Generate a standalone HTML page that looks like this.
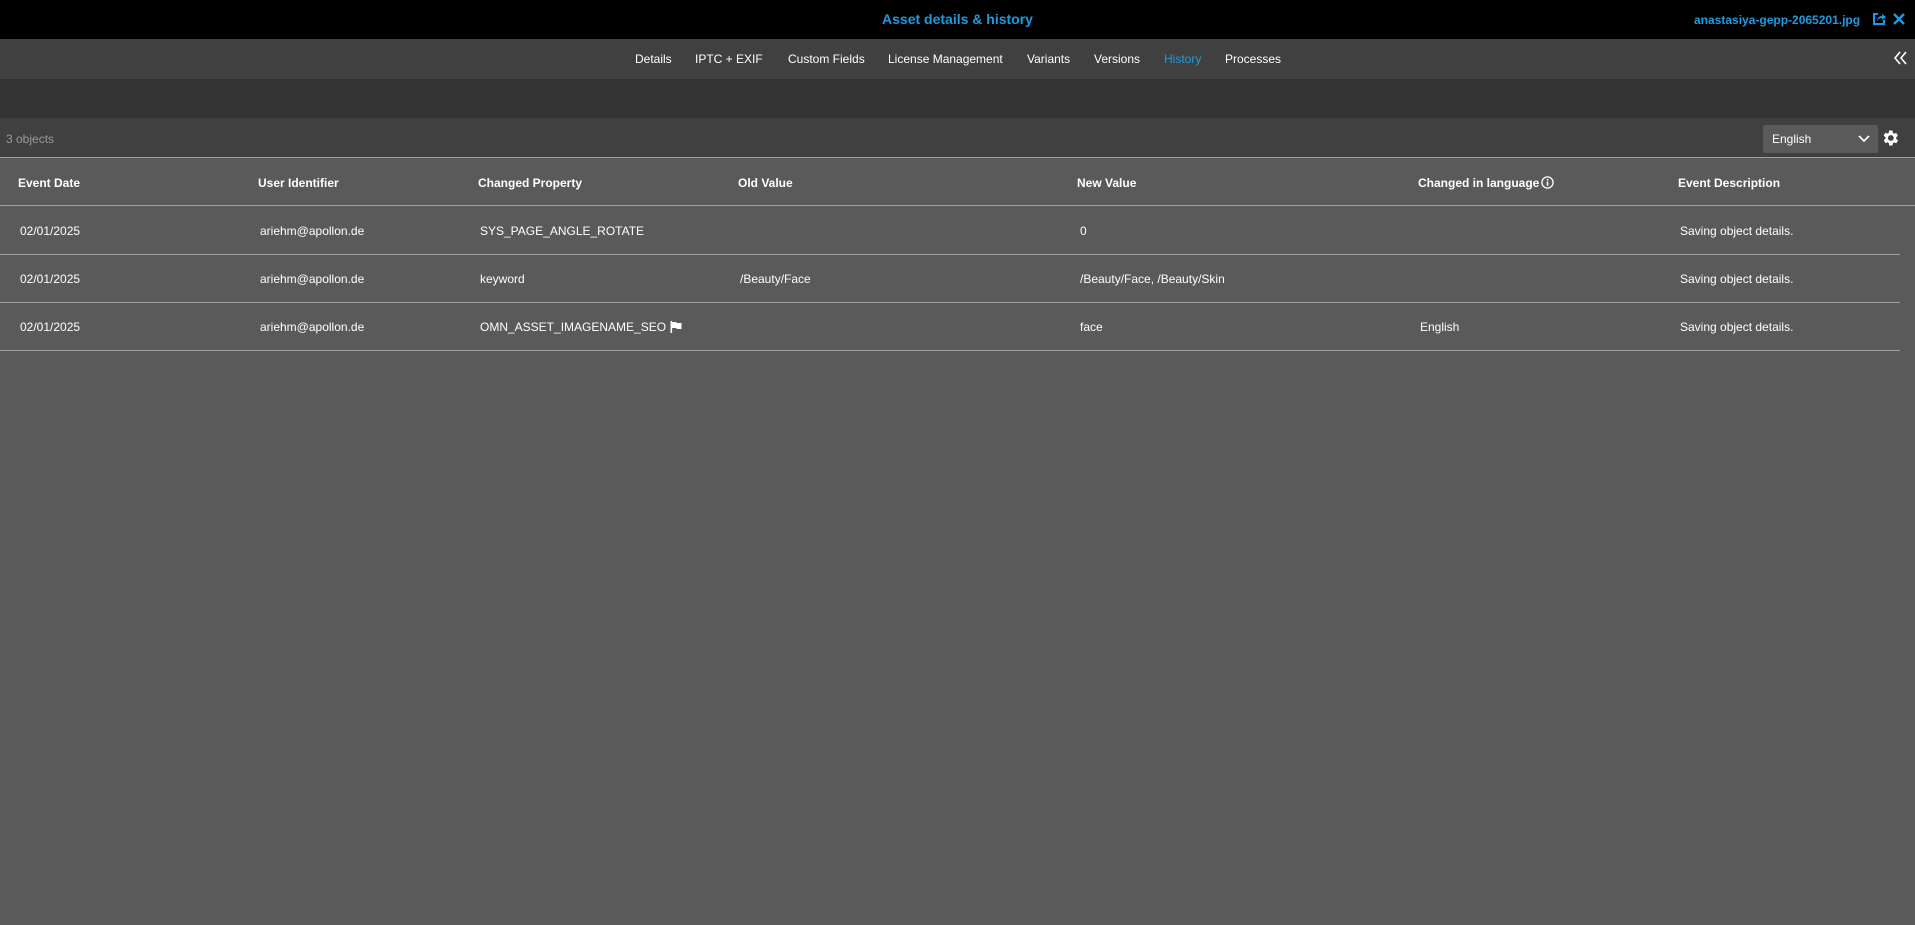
<!DOCTYPE html>
<html><head><meta charset="utf-8"><style>
*{margin:0;padding:0;box-sizing:border-box}
body{width:1915px;height:925px;background:#5a5a5a;font-family:"Liberation Sans",Arial,sans-serif;overflow:hidden;position:relative;color:#fff}
.abs{position:absolute}
#top{left:0;top:0;width:1915px;height:39px;background:#000}
#tabs{left:0;top:39px;width:1915px;height:40px;background:#404040}
#band{left:0;top:79px;width:1915px;height:39px;background:#333}
#tool{left:0;top:118px;width:1915px;height:40px;background:#404040;border-bottom:1px solid #a0a0a0}
.t{position:absolute;font-size:12px;white-space:nowrap;line-height:16px}
.h{font-weight:bold}
.line{position:absolute;left:0;width:1900px;height:1px;background:#a0a0a0}
</style></head><body>
<div id="top" class="abs"></div>
<div class="t" style="left:0;width:1915px;text-align:center;top:11px;font-size:14px;font-weight:bold;color:#1d9be2">Asset details &amp; history</div>
<div class="t" style="left:1694px;top:12px;font-size:12px;font-weight:bold;color:#1d9be2">anastasiya-gepp-2065201.jpg</div>
<svg class="abs" style="left:1872px;top:12px" width="14" height="14" viewBox="0 0 14 14"><path d="M6 2H2v10h10V8" fill="none" stroke="#1d9be2" stroke-width="2"/><path d="M5 9c0-3 2-5 5-5V2l4 3-4 3V6C8 6 6 7 5 9z" fill="#1d9be2"/></svg>
<svg class="abs" style="left:1893px;top:13px" width="12" height="12" viewBox="0 0 12 12"><path d="M1 1L11 11M11 1L1 11" stroke="#1d9be2" stroke-width="2.4"/></svg>
<div id="tabs" class="abs"></div>
<div class="t" style="left:635px;top:51px">Details</div>
<div class="t" style="left:695px;top:51px">IPTC + EXIF</div>
<div class="t" style="left:788px;top:51px">Custom Fields</div>
<div class="t" style="left:888px;top:51px">License Management</div>
<div class="t" style="left:1027px;top:51px">Variants</div>
<div class="t" style="left:1094px;top:51px">Versions</div>
<div class="t" style="left:1164px;top:51px;color:#1d9be2">History</div>
<div class="t" style="left:1225px;top:51px">Processes</div>
<svg class="abs" style="left:1893px;top:51px" width="14" height="14" viewBox="0 0 14 14"><path d="M7 1L2 7l5 6M13 1L8 7l5 6" fill="none" stroke="#fff" stroke-width="1.6"/></svg>
<div id="band" class="abs"></div>
<div id="tool" class="abs"></div>
<div class="t" style="left:6px;top:131px;font-size:12px;color:#9a9a9a">3 objects</div>
<div class="abs" style="left:1763px;top:125px;width:115px;height:28px;background:#5a5a5a;border-radius:2px"></div>
<div class="t" style="left:1772px;top:131px;font-size:12px">English</div>
<svg class="abs" style="left:1858px;top:135px" width="12" height="8" viewBox="0 0 12 8"><path d="M1 1l5 5 5-5" fill="none" stroke="#fff" stroke-width="1.6"/></svg>
<svg class="abs" style="left:1880px;top:128px" width="20" height="20" viewBox="0 0 24 24"><path fill="#fff" d="M19.4 13a7.5 7.5 0 000-2l2.1-1.6-2-3.5-2.5 1a7.5 7.5 0 00-1.7-1L15 3h-4l-.4 2.7a7.5 7.5 0 00-1.7 1l-2.5-1-2 3.5L6.6 11a7.5 7.5 0 000 2l-2.1 1.6 2 3.5 2.5-1a7.5 7.5 0 001.7 1L11 21h4l.4-2.7a7.5 7.5 0 001.7-1l2.5 1 2-3.5zM13 15.5a3.5 3.5 0 110-7 3.5 3.5 0 010 7z"/></svg>

<div class="t h" style="left:18px;top:175px">Event Date</div>
<div class="t h" style="left:258px;top:175px">User Identifier</div>
<div class="t h" style="left:478px;top:175px">Changed Property</div>
<div class="t h" style="left:738px;top:175px">Old Value</div>
<div class="t h" style="left:1077px;top:175px">New Value</div>
<div class="t h" style="left:1418px;top:175px">Changed in language</div>
<svg class="abs" style="left:1541px;top:176px" width="13" height="13" viewBox="0 0 13 13"><circle cx="6.5" cy="6.5" r="5.6" fill="none" stroke="#fff" stroke-width="1.3"/><rect x="5.8" y="5.5" width="1.5" height="4.2" fill="#fff"/><rect x="5.8" y="3" width="1.5" height="1.5" fill="#fff"/></svg>
<div class="t h" style="left:1678px;top:175px">Event Description</div>
<div class="line" style="top:205px;width:1915px"></div>

<div class="t" style="left:20px;top:223px">02/01/2025</div>
<div class="t" style="left:260px;top:223px">ariehm@apollon.de</div>
<div class="t" style="left:480px;top:223px">SYS_PAGE_ANGLE_ROTATE</div>
<div class="t" style="left:1080px;top:223px">0</div>
<div class="t" style="left:1680px;top:223px">Saving object details.</div>
<div class="line" style="top:254px"></div>

<div class="t" style="left:20px;top:271px">02/01/2025</div>
<div class="t" style="left:260px;top:271px">ariehm@apollon.de</div>
<div class="t" style="left:480px;top:271px">keyword</div>
<div class="t" style="left:740px;top:271px">/Beauty/Face</div>
<div class="t" style="left:1080px;top:271px">/Beauty/Face, /Beauty/Skin</div>
<div class="t" style="left:1680px;top:271px">Saving object details.</div>
<div class="line" style="top:302px"></div>

<div class="t" style="left:20px;top:319px">02/01/2025</div>
<div class="t" style="left:260px;top:319px">ariehm@apollon.de</div>
<div class="t" style="left:480px;top:319px">OMN_ASSET_IMAGENAME_SEO</div>
<svg class="abs" style="left:670px;top:321px" width="12" height="12" viewBox="0 0 12 12"><rect x="0.5" y="0" width="1.6" height="12" fill="#fff"/><path d="M2 1h4l1 1h4.5v6H7l-1-1H2z" fill="#fff"/></svg>
<div class="t" style="left:1080px;top:319px">face</div>
<div class="t" style="left:1420px;top:319px">English</div>
<div class="t" style="left:1680px;top:319px">Saving object details.</div>
<div class="line" style="top:350px"></div>
</body></html>
